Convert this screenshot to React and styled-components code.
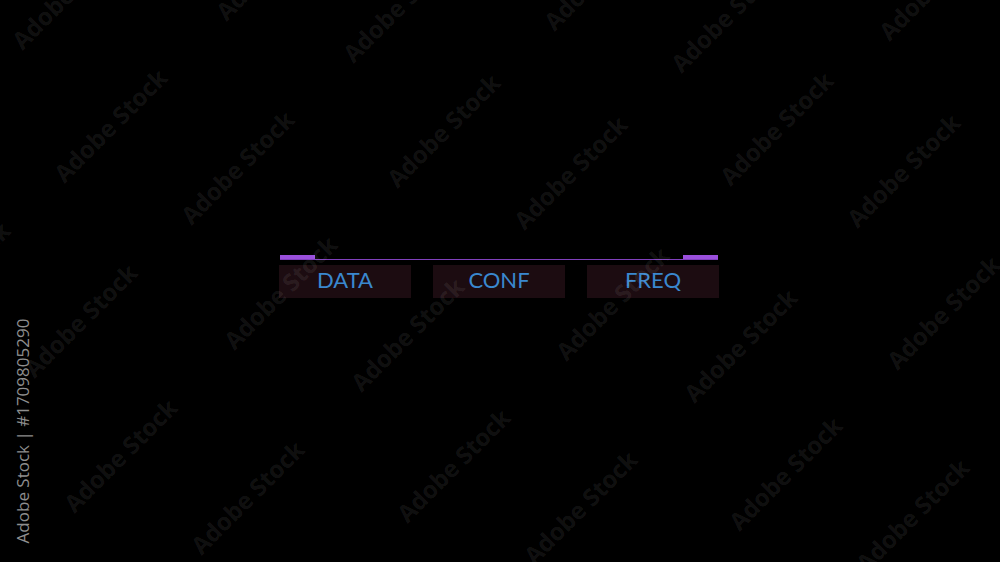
import React from "react";
import styled, { createGlobalStyle } from "styled-components";

const Global = createGlobalStyle`
  html, body { margin: 0; padding: 0; background: #000; }
  body { width: 1000px; height: 562px; overflow: hidden; }
  #root { width: 100%; height: 100%; }
`;

const Stage = styled.div`
  position: relative;
  width: 1000px;
  height: 562px;
  background: #000;
  overflow: hidden;
  display: flex;
  justify-content: center;
  padding-top: 255px;
  padding-right: 2px;
  box-sizing: border-box;
`;

const Panel = styled.div`
  width: 440px;
  display: flex;
  flex-direction: column;
  gap: 5px;
`;

const Rule = styled.div`
  height: 4px;
  display: flex;
  justify-content: space-between;
  align-items: flex-end;
  border-bottom: 1px solid #8040bc;
  margin: 0 1px;
`;

const Accent = styled.span`
  width: 35px;
  height: 4px;
  background: #9a4fdc;
`;

const Tabs = styled.div`
  display: flex;
  justify-content: space-between;
`;

const Tab = styled.div`
  width: 132px;
  height: 33px;
  background: #1c0c11;
  color: #3a88cf;
  font-family: Lato, "Open Sans", sans-serif;
  font-weight: 400;
  font-size: 22px;
  display: flex;
  align-items: center;
  justify-content: center;
  padding-bottom: 5px;
  box-sizing: border-box;
`;

const Overlay = styled.div`
  position: absolute;
  inset: 0;
  pointer-events: none;
`;

const Mark = styled.span`
  position: absolute;
  font-family: "Open Sans", "DejaVu Sans", sans-serif;
  font-weight: 700;
  font-size: 24px;
  color: rgba(255, 255, 255, 0.085);
  white-space: nowrap;
  transform: translate(-50%, -50%) rotate(-45deg);
`;

const Credit = styled.span`
  position: absolute;
  left: 22px;
  top: 431px;
  font-family: "Open Sans", "DejaVu Sans", sans-serif;
  font-size: 17px;
  color: #8e8e8e;
  white-space: nowrap;
  transform: translate(-50%, -50%) rotate(-90deg);
`;

const marks = [
  [-59, -50], [68, -8], [272, -37], [399, 5], [600, -27], [727, 15], [935, -17], [1062, 25],
  [110, 125], [237, 167], [443, 130], [570, 172], [776, 128], [903, 170],
  [-47, 278], [80, 320], [280, 292], [407, 334], [612, 303], [740, 345], [943, 312], [1070, 354],
  [120, 455], [247, 497], [453, 465], [580, 507], [785, 473], [912, 515],
];

export default function App() {
  return (
    <>
      <Global />
      <Stage>
        <Panel>
          <Rule>
            <Accent />
            <Accent />
          </Rule>
          <Tabs>
            <Tab>DATA</Tab>
            <Tab>CONF</Tab>
            <Tab>FREQ</Tab>
          </Tabs>
        </Panel>
        <Overlay>
          {marks.map(([x, y], i) => (
            <Mark key={i} style={{ left: x, top: y }}>Adobe Stock</Mark>
          ))}
          <Credit>Adobe Stock | #1709805290</Credit>
        </Overlay>
      </Stage>
    </>
  );
}
